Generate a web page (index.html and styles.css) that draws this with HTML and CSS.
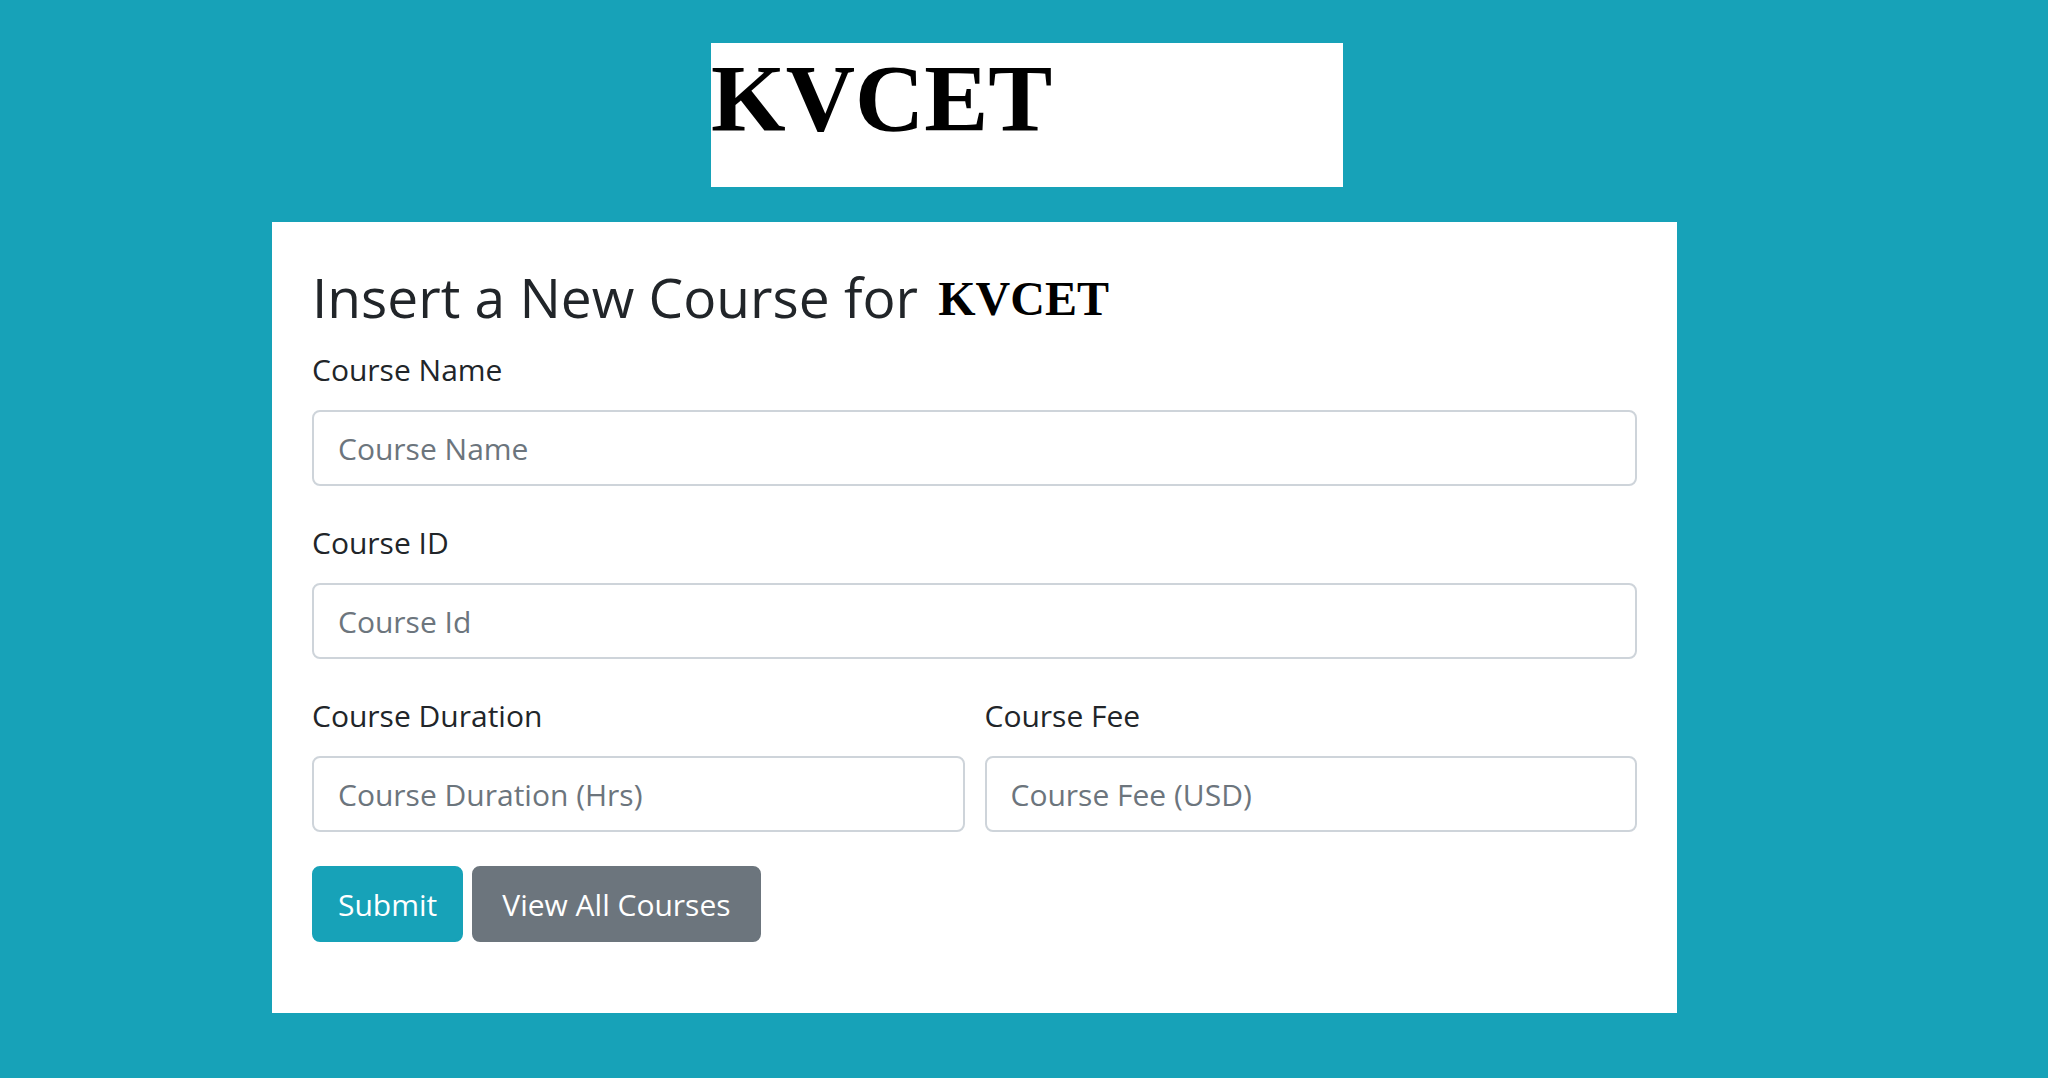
FILE: index.html
```html
<!DOCTYPE html>
<html lang="en">
<head>
<meta charset="utf-8">
<title>Insert a New Course</title>
<link rel="stylesheet" href="styles.css">
</head>
<body>
  <header class="brand-wrap">
    <div class="brand">KVCET</div>
  </header>
  <main class="card">
    <h3 class="card-title">Insert a New Course for <span class="title-logo">KVCET</span></h3>
    <form class="course-form">
      <div class="form-group">
        <label class="form-label" for="cname">Course Name</label>
        <input class="form-control" id="cname" type="text" placeholder="Course Name">
      </div>
      <div class="form-group">
        <label class="form-label" for="cid">Course ID</label>
        <input class="form-control" id="cid" type="text" placeholder="Course Id">
      </div>
      <div class="form-row">
        <div class="form-group col">
          <label class="form-label" for="cdur">Course Duration</label>
          <input class="form-control" id="cdur" type="text" placeholder="Course Duration (Hrs)">
        </div>
        <div class="form-group col">
          <label class="form-label" for="cfee">Course Fee</label>
          <input class="form-control" id="cfee" type="text" placeholder="Course Fee (USD)">
        </div>
      </div>
      <div class="actions">
        <button type="submit" class="btn btn-info">Submit</button>
        <button type="button" class="btn btn-secondary">View All Courses</button>
      </div>
    </form>
  </main>
</body>
</html>
```

FILE: styles.css
```css
* { box-sizing: border-box; }

html, body {
  margin: 0;
  padding: 0;
}

body {
  background: #17a2b8;
  font-family: "Open Sans", "Noto Sans", sans-serif;
  color: #212529;
  min-height: 1078px;
}

.brand-wrap {
  padding-top: 43px;
  display: flex;
}

.brand {
  margin-left: 711px;
  width: 632px;
  height: 144px;
  background: #ffffff;
  color: #000000;
  font-family: "Liberation Serif", "Times New Roman", serif;
  font-weight: bold;
  font-size: 96px;
  line-height: 1;
  padding-top: 8px;
}

.card {
  display: block;
  margin: 35px 0 0 272px;
  width: 1405px;
  background: #ffffff;
  padding: 44px 40px 71px 40px;
}

.card-title {
  margin: 0 0 14px 0;
  font-size: 55px;
  font-weight: 400;
  line-height: 62px;
  color: #212529;
}

.title-logo {
  font-family: "Liberation Serif", "Times New Roman", serif;
  font-weight: bold;
  font-size: 48px;
  color: #000000;
  margin-left: 6px;
  position: relative;
  top: -3px;
}

.course-form {
  margin: 0;
}

.form-group {
  margin-bottom: 34px;
}

.form-label {
  display: block;
  font-size: 30px;
  line-height: 45px;
  margin-bottom: 18px;
  color: #212529;
}

.form-control {
  display: block;
  width: 100%;
  height: 76px;
  padding: 0 24px;
  font-family: "Open Sans", "Noto Sans", sans-serif;
  font-size: 30px;
  color: #495057;
  background: #ffffff;
  border: 2px solid #ced4da;
  border-radius: 8px;
  outline: none;
}

.form-control::placeholder {
  color: #6c757d;
  opacity: 1;
}

.form-row {
  display: flex;
  gap: 20px;
}

.form-row .col {
  flex: 1 1 0;
  min-width: 0;
}

.actions {
  display: flex;
  gap: 9px;
}

.btn {
  height: 76px;
  padding: 0 24px;
  font-family: "Open Sans", "Noto Sans", sans-serif;
  font-size: 30px;
  color: #ffffff;
  border: 2px solid transparent;
  border-radius: 8px;
  cursor: pointer;
}

.btn-info {
  background: #17a2b8;
  border-color: #17a2b8;
}

.btn-secondary {
  background: #6c757d;
  border-color: #6c757d;
  padding: 0 28px;
}
```
